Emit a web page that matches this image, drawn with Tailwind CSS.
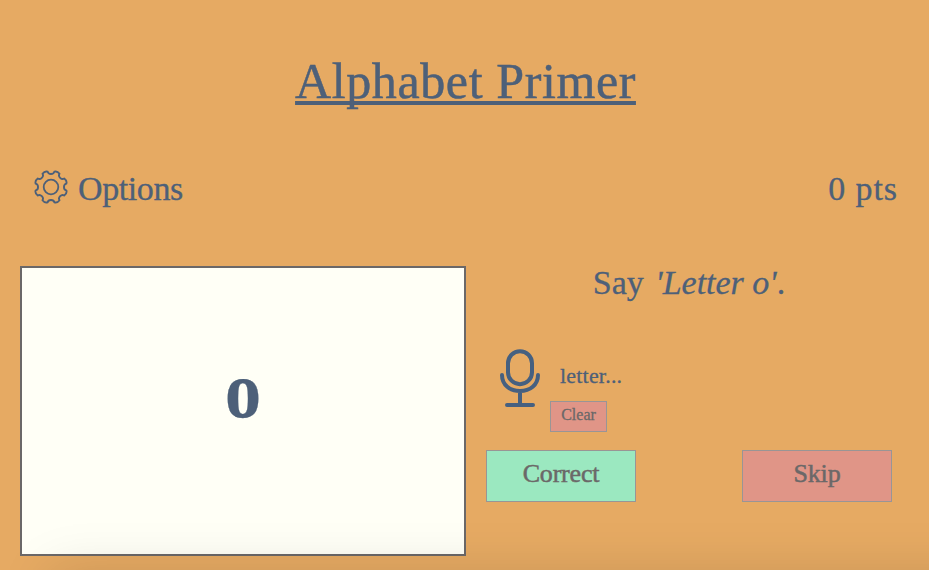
<!DOCTYPE html>
<html lang="en">
<head>
<meta charset="utf-8">
<title>Alphabet Primer</title>
<script src="https://cdn.jsdelivr.net/npm/@tailwindcss/browser@4"></script>
</head>
<body class="relative h-[570px] w-[929px] overflow-hidden bg-[#e6aa63] font-['Liberation_Serif',serif] text-[#4d6079] [-webkit-text-stroke:0.3px]">
<header class="flex h-[160px] justify-center pl-[2px] pt-[50px]">
  <h1 class="h-[62px] whitespace-nowrap text-[50px]/[62px] tracking-[0.6px] underline decoration-[4px] underline-offset-[3px] [-webkit-text-stroke:0.5px] [text-decoration-skip-ink:none]">Alphabet Primer</h1>
</header>
<nav class="flex h-[106px] items-start justify-between pl-[34px] pr-[31px] pt-[10px]">
  <button class="flex items-start gap-[10px]">
    <svg class="size-[34px]" viewBox="-17 -17 34 34" fill="none" stroke="currentColor" stroke-width="1.8" stroke-linejoin="round">
      <path d="M-3.2-14.6C-2.6-11.6 2.6-11.6 3.2-14.6Q6-15.5 8.1-12.6C6.4-10 10-6.4 12.6-8.1Q15.5-6 14.6-3.2C11.6-2.6 11.6 2.6 14.6 3.2Q15.5 6 12.6 8.1C10 6.4 6.4 10 8.1 12.6Q6 15.5 3.2 14.6C2.6 11.6-2.6 11.6-3.2 14.6Q-6 15.5-8.1 12.6C-6.4 10-10 6.4-12.6 8.1Q-15.5 6-14.6 3.2C-11.6 2.6-11.6-2.6-14.6-3.2Q-15.5-6-12.6-8.1C-10-6.4-6.4-10-8.1-12.6Q-6-15.5-3.2-14.6Z" transform="scale(1.05)"/>
      <circle r="7.3"/>
    </svg>
    <span class="text-[34px]/[38px] tracking-[-0.4px]">Options</span>
  </button>
  <span class="text-[34px]/[38px] tracking-[0.9px]">0 pts</span>
</nav>
<main class="flex pl-[20px]">
  <section class="flex h-[290px] w-[446px] items-center justify-center border-2 border-[#6b6868] bg-[#fffff6]">
    <span class="-mt-[42px] inline-block scale-x-90 text-[80px]/[80px] font-bold">o</span>
  </section>
  <section class="ml-[20px] w-[406px]">
    <p class="h-[82px] whitespace-nowrap text-center text-[34px]/[34px]">Say <i class="ml-[3px]">'Letter o'</i>.</p>
    <div class="flex h-[102px] pl-[13px]">
      <svg class="h-[60px] w-[42px]" viewBox="0 0 42 60" fill="none" stroke="#466080" stroke-width="4" stroke-linecap="round">
        <rect x="9" y="3.2" width="24" height="33" rx="12"/>
        <path d="M3 27C3 37 11 43 21 43S39 37 39 27M21 43V57M8 57H34"/>
      </svg>
      <div class="ml-[9px]">
        <p class="h-[53px] pl-[10px] pt-[16px] text-[22px]/[24px] tracking-[0.2px]">letter...</p>
        <button class="block h-[31px] w-[57px] border border-[#999595] bg-[#e09587] pb-[3px] text-[16px]/[26px] text-[#6b6868]">Clear</button>
      </div>
    </div>
    <div class="flex justify-between">
      <button class="h-[52px] w-[150px] border border-[#999595] bg-[#9be8c0] pb-[5px] text-[26px] tracking-[-0.2px] text-[#6b6868] [-webkit-text-stroke:0.5px]">Correct</button>
      <button class="h-[52px] w-[150px] border border-[#999595] bg-[#e09587] pb-[5px] text-[26px] tracking-[-0.2px] text-[#6b6868] [-webkit-text-stroke:0.5px]">Skip</button>
    </div>
  </section>
</main>
<div class="pointer-events-none absolute inset-0 overflow-hidden">
  <div class="ml-[50px] mt-[572px] h-[200px] w-[1000px] shadow-[0_0_50px_rgba(0,0,0,0.13)]"></div>
</div>
</body>
</html>
